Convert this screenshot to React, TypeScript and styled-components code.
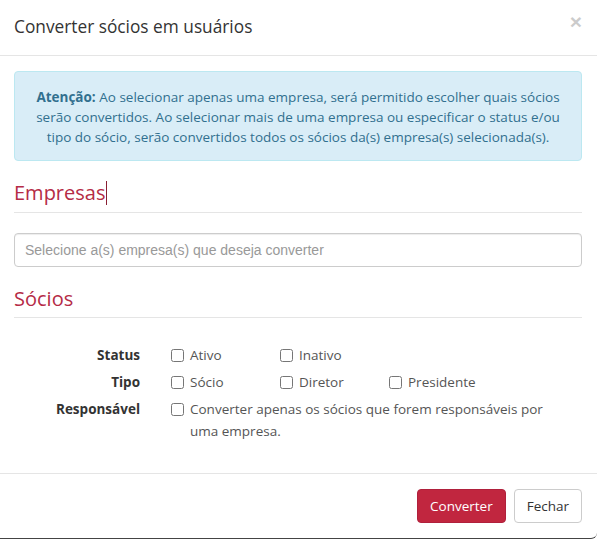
import * as React from 'react';
import styled, { createGlobalStyle } from 'styled-components';

const GlobalStyle = createGlobalStyle`
  html, body {
    margin: 0;
    padding: 0;
    background: #fff;
  }
  * {
    box-sizing: border-box;
  }
`

const Modal = styled.div`
  width: 597px;
  height: 539px;
  display: flex;
  flex-direction: column;
  background: #fff;
  border-bottom: 1px solid #444;
  border-bottom-right-radius: 6px;
  font-family: "Open Sans", sans-serif;
  font-size: 13.5px;
  color: #333;
`

const Header = styled.div`
  display: flex;
  align-items: flex-start;
  justify-content: space-between;
  padding: 14px 15px 15px 14px;
  border-bottom: 1px solid #e5e5e5;
`

const Title = styled.h4`
  margin: 0;
  font-size: 17.3px;
  font-weight: 400;
  line-height: 26px;
  color: #333;
`

const Close = styled.button`
  border: 0;
  background: transparent;
  padding: 0;
  margin-top: -3px;
  font-family: "Liberation Sans", Arial, sans-serif;
  font-size: 21px;
  font-weight: 700;
  line-height: 1;
  color: #000;
  opacity: 0.2;
  cursor: pointer;
`

const Body = styled.div`
  flex: 1;
  padding: 15px 15px 15px 14px;
`

const Alert = styled.div`
  padding: 15px 20px 13px;
  border: 1px solid #bce8f1;
  border-radius: 4px;
  background: #d9edf7;
  color: #31708f;
  text-align: center;
  line-height: 20px;

  b {
    font-weight: 700;
  }
`

const SectionTitle = styled.h3`
  margin: 20px 0 0;
  padding-bottom: 7px;
  border-bottom: 1px solid #e5e5e5;
  font-size: 20px;
  font-weight: 400;
  line-height: 23px;
  color: #b52b46;
`

const Caret = styled.span`
  display: inline-block;
  width: 1px;
  height: 24px;
  margin-left: 1px;
  vertical-align: -5px;
  background: #8a1f33;
`

const Select = styled.div`
  margin-top: 20px;
  height: 34px;
  display: flex;
  align-items: center;
  padding: 0 10px;
  border: 1px solid #ccc;
  border-radius: 4px;
  box-shadow: inset 0 1px 1px rgba(0, 0, 0, 0.075);
  font-family: "Liberation Sans", Arial, sans-serif;
  font-size: 14px;
  color: #999;
`

const Form = styled.div`
  display: grid;
  grid-template-columns: 126px 1fr;
  column-gap: 31px;
  row-gap: 5px;
  margin-top: 26px;
  line-height: 22px;
`

const Label = styled.div`
  text-align: right;
  font-weight: 700;
  color: #333;
`

const Options = styled.div`
  display: flex;
`

const Option = styled.label<{ wide?: boolean }>`
  display: flex;
  align-items: flex-start;
  gap: 6px;
  width: ${p => (p.wide ? '380px' : '109px')};
  color: #555;
`

const Box = styled.input`
  flex: none;
  width: 13px;
  height: 13px;
  margin: 5px 0 0;
`

const Footer = styled.div`
  display: flex;
  justify-content: flex-end;
  gap: 8px;
  padding: 15px;
  border-top: 1px solid #e5e5e5;
`

const Button = styled.button<{ primary?: boolean }>`
  height: 34px;
  padding: 0 12px;
  border-radius: 4px;
  border: 1px solid ${p => (p.primary ? '#b0203c' : '#ccc')};
  background: ${p => (p.primary ? '#c1263f' : '#fff')};
  color: ${p => (p.primary ? '#fff' : '#333')};
  font-family: "Open Sans", sans-serif;
  font-size: 13.5px;
  cursor: pointer;
`

const rows = [
  { label: 'Status', options: ['Ativo', 'Inativo'] },
  { label: 'Tipo', options: ['Sócio', 'Diretor', 'Presidente'] },
]

export default function App() {
  return (
    <>
      <GlobalStyle />
      <Modal>
        <Header>
          <Title>Converter sócios em usuários</Title>
          <Close>×</Close>
        </Header>
        <Body>
          <Alert>
            <b>Atenção:</b> Ao selecionar apenas uma empresa, será permitido escolher quais sócios
            serão convertidos. Ao selecionar mais de uma empresa ou especificar o status e/ou
            tipo do sócio, serão convertidos todos os sócios da(s) empresa(s) selecionada(s).
          </Alert>
          <SectionTitle>
            Empresas<Caret />
          </SectionTitle>
          <Select>Selecione a(s) empresa(s) que deseja converter</Select>
          <SectionTitle>Sócios</SectionTitle>
          <Form>
            {rows.map(row => (
              <React.Fragment key={row.label}>
                <Label>{row.label}</Label>
                <Options>
                  {row.options.map(opt => (
                    <Option key={opt}>
                      <Box type="checkbox" />
                      {opt}
                    </Option>
                  ))}
                </Options>
              </React.Fragment>
            ))}
            <Label>Responsável</Label>
            <Options>
              <Option wide>
                <Box type="checkbox" />
                <span>Converter apenas os sócios que forem responsáveis por uma empresa.</span>
              </Option>
            </Options>
          </Form>
        </Body>
        <Footer>
          <Button primary>Converter</Button>
          <Button>Fechar</Button>
        </Footer>
      </Modal>
    </>
  )
}
